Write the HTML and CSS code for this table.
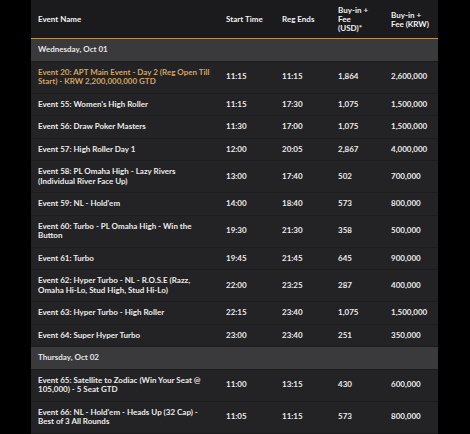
FILE: index.html
```html
<!DOCTYPE html>
<html>
<head>
<meta charset="utf-8">
<link rel="stylesheet" href="styles.css">
</head>
<body>
<div class="panel">
<table class="sched">
  <colgroup>
    <col class="c-name"><col class="c-start"><col class="c-reg"><col class="c-usd"><col class="c-krw">
  </colgroup>
  <thead>
    <tr>
      <th>Event Name</th>
      <th>Start Time</th>
      <th>Reg Ends</th>
      <th>Buy-in +<br>Fee<br>(USD)*</th>
      <th>Buy-in +<br>Fee (KRW)</th>
    </tr>
  </thead>
  <tbody>
    <tr class="day"><td colspan="5">Wednesday, Oct 01</td></tr>
    <tr class="main"><td>Event 20: APT Main Event - Day 2 (Reg Open Till Start) - KRW 2,200,000,000 GTD</td><td>11:15</td><td>11:15</td><td>1,864</td><td>2,600,000</td></tr>
    <tr><td>Event 55: Women's High Roller</td><td>11:15</td><td>17:30</td><td>1,075</td><td>1,500,000</td></tr>
    <tr><td>Event 56: Draw Poker Masters</td><td>11:30</td><td>17:00</td><td>1,075</td><td>1,500,000</td></tr>
    <tr><td>Event 57: High Roller Day 1</td><td>12:00</td><td>20:05</td><td>2,867</td><td>4,000,000</td></tr>
    <tr><td>Event 58: PL Omaha High - Lazy Rivers (Individual River Face Up)</td><td>13:00</td><td>17:40</td><td>502</td><td>700,000</td></tr>
    <tr><td>Event 59: NL - Hold'em</td><td>14:00</td><td>18:40</td><td>573</td><td>800,000</td></tr>
    <tr><td>Event 60: Turbo - PL Omaha High - Win the Button</td><td>19:30</td><td>21:30</td><td>358</td><td>500,000</td></tr>
    <tr><td>Event 61: Turbo</td><td>19:45</td><td>21:45</td><td>645</td><td>900,000</td></tr>
    <tr><td>Event 62: Hyper Turbo - NL - R.O.S.E (Razz, Omaha Hi-Lo, Stud High, Stud Hi-Lo)</td><td>22:00</td><td>23:25</td><td>287</td><td>400,000</td></tr>
    <tr><td>Event 63: Hyper Turbo - High Roller</td><td>22:15</td><td>23:40</td><td>1,075</td><td>1,500,000</td></tr>
    <tr><td>Event 64: Super Hyper Turbo</td><td>23:00</td><td>23:40</td><td>251</td><td>350,000</td></tr>
    <tr class="day"><td colspan="5">Thursday, Oct 02</td></tr>
    <tr><td>Event 65: Satellite to Zodiac (Win Your Seat @ 105,000) - 5 Seat GTD</td><td>11:00</td><td>13:15</td><td>430</td><td>600,000</td></tr>
    <tr><td>Event 66: NL - Hold'em - Heads Up (32 Cap) - Best of 3 All Rounds</td><td>11:05</td><td>11:15</td><td>573</td><td>800,000</td></tr>
  </tbody>
</table>
</div>
</body>
</html>
```

FILE: styles.css
```css
html, body {
  margin: 0;
  padding: 0;
  background: #000;
}
body {
  width: 470px;
  height: 434px;
  overflow: hidden;
  font-family: Lato, "Open Sans", sans-serif;
}
.panel {
  margin-left: 31px;
  width: 407px;
  background: #232225;
}
.sched {
  width: 407px;
  border-collapse: collapse;
  table-layout: fixed;
  font-size: 8px;
  font-weight: 700;
  color: #ebebeb;
}
.c-name { width: 188px; }
.c-start { width: 56px; }
.c-reg { width: 56px; }
.c-usd { width: 53px; }
.c-krw { width: 54px; }

.sched th {
  background: #1b1a1d;
  text-align: left;
  font-weight: 700;
  line-height: 9px;
  padding: 6px 2px 5px 7px;
  height: 27px;
  border-bottom: 1px solid #b8925a;
  color: #f2f2f2;
}
.sched td {
  text-align: left;
  vertical-align: middle;
  line-height: 9.5px;
  padding: 6px 2px 6px 7px;
  border-bottom: 1px solid #1c1b1e;
  white-space: nowrap;
}
.sched td:first-child {
  padding-right: 6px;
  white-space: normal;
}
.sched tr.day td {
  background: #3a393c;
  color: #e6e6e6;
}
.sched tr.main td:first-child {
  color: #d3a562;
}
```
